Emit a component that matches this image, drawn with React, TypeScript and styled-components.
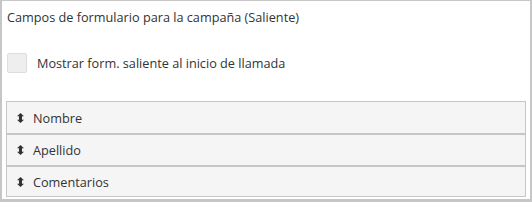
import React from 'react';
import styled, { createGlobalStyle } from 'styled-components';

const GlobalStyle = createGlobalStyle`
  html, body {
    margin: 0;
    padding: 0;
    background: #ffffff;
  }
  * {
    box-sizing: border-box;
  }
`;

const Panel = styled.div`
  width: 532px;
  height: 202px;
  border: 2px solid #c6c6c6;
  border-top-width: 1px;
  border-bottom-width: 3px;
  background: #ffffff;
  padding: 0 4px 0 4px;
  font-family: "Open Sans", "Noto Sans", sans-serif;
  font-size: 12.7px;
  color: #333333;
  display: flex;
  flex-direction: column;
`;

const Title = styled.div`
  padding: 6px 0 0 1px;
  height: 26px;
  line-height: 20px;
`;

const CheckRow = styled.label`
  display: flex;
  align-items: center;
  gap: 10px;
  margin-top: 26px;
  padding-left: 1px;
  height: 20px;
`;

const Box = styled.span`
  width: 20px;
  height: 20px;
  border: 1px solid #dddddd;
  border-radius: 2px;
  background: #eeeeee;
`;

const List = styled.ul`
  list-style: none;
  margin: 28px 0 0 0;
  padding: 0;
  width: 520px;
`;

const Item = styled.li`
  display: flex;
  align-items: center;
  gap: 9px;
  height: 32px;
  padding-left: 10px;
  border: 1px solid #c6c6c6;
  background: #f5f5f5;

  & + & {
    border-top-width: 2px;
  }
  &:not(:last-child) {
    border-bottom: none;
  }
`;

const SortIcon = () => (
  <svg width="7" height="10" viewBox="0 0 7 10">
    <path d="M3.5 0 L7 3.2 L5 3.2 L5 6.8 L7 6.8 L3.5 10 L0 6.8 L2 6.8 L2 3.2 L0 3.2 Z" fill="#333333" />
  </svg>
);

const fields = ['Nombre', 'Apellido', 'Comentarios'];

const App = () => {
  return (
    <>
      <GlobalStyle />
      <Panel>
        <Title>Campos de formulario para la campaña (Saliente)</Title>
        <CheckRow>
          <Box />
          <span>Mostrar form. saliente al inicio de llamada</span>
        </CheckRow>
        <List>
          {fields.map((f) => (
            <Item key={f}>
              <SortIcon />
              {f}
            </Item>
          ))}
        </List>
      </Panel>
    </>
  );
};

export default App;
